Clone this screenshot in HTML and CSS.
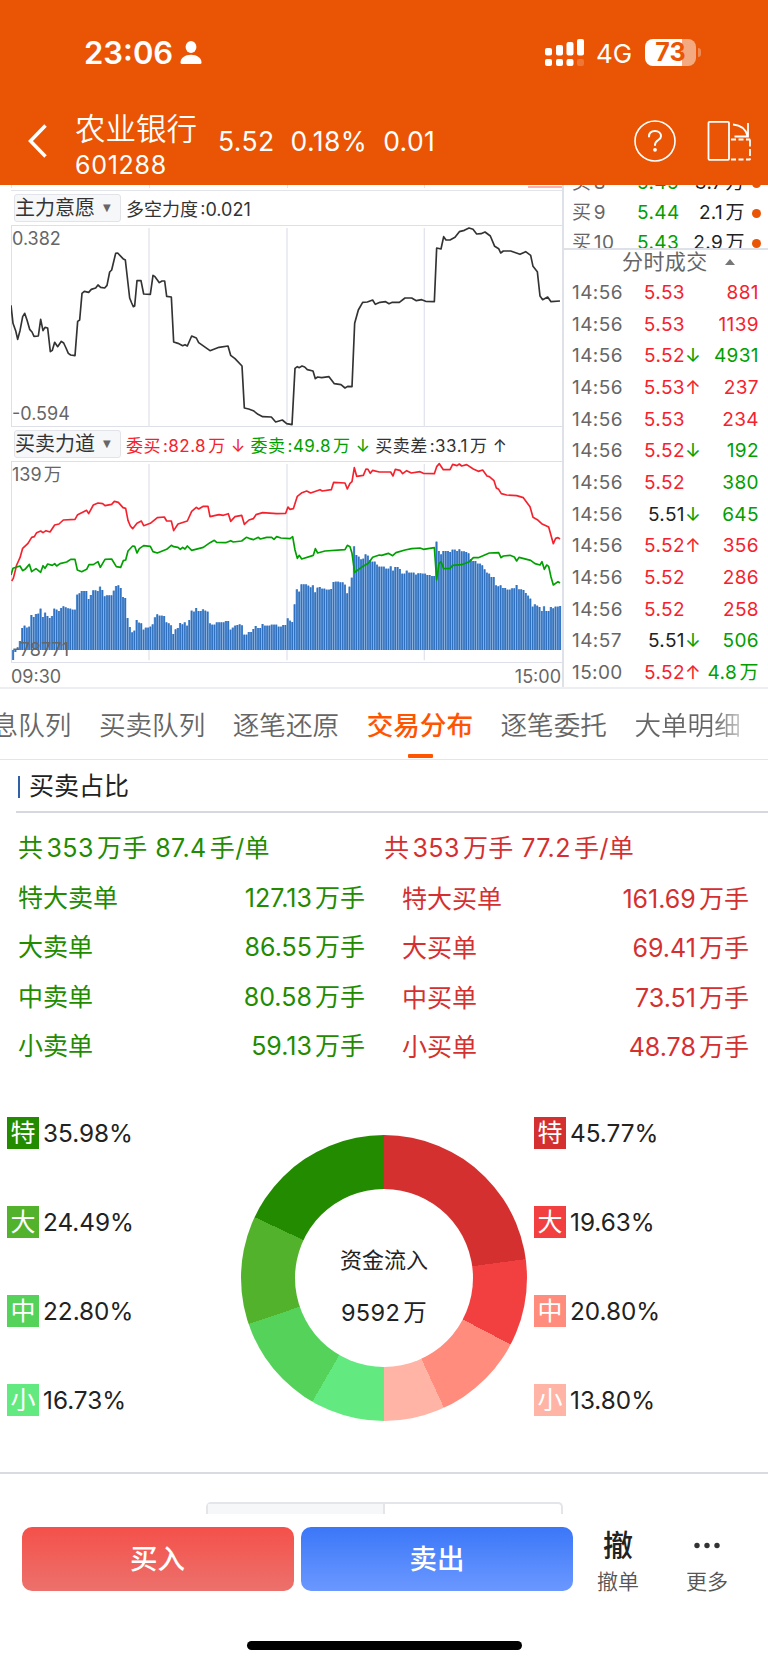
FILE: index.html
```html
<!DOCTYPE html>
<html lang="zh-CN">
  <head>
    <meta charset="UTF-8" />
    <meta name="viewport" content="width=device-width, initial-scale=1.0" />
    <title>农业银行 601288</title>
    <link rel="stylesheet" href="styles.css" />
  </head>

  <body>
    <header>
      <div class="status">
        <span class="time">23:06</span>
        <svg class="person" width="22" height="24" viewBox="0 0 22 24" fill="#fff">
          <ellipse cx="11" cy="6" rx="5.4" ry="6" />
          <path d="M0.5 21.5C0.5 17 5 13.8 11 13.8S21.500 17 21.500 21.500Q21.500 23 20 23H2Q0.500 23 0.500 21.500Z" />
        </svg>
        <svg class="signal" width="40" height="28" viewBox="0 0 40 28" fill="#fff">
          <rect x="0" y="9" width="7" height="7.500" rx="2" />
          <rect x="11" y="6" width="7" height="10.500" rx="2" />
          <rect x="21.500" y="3" width="7" height="13.500" rx="2" />
          <rect x="32" y="0" width="7" height="16.500" rx="2" />
          <rect x="0" y="20" width="7" height="7" rx="2" />
          <rect x="11" y="20" width="7" height="7" rx="2" />
          <rect x="21.500" y="20" width="7" height="7" rx="2" />
          <rect x="32" y="20" width="7" height="7" rx="2" opacity="0.2" />
        </svg>
        <span class="net">4G</span>
        <span class="battery">73</span>
        <i class="nub"></i>
      </div>
      <div class="stock">
        <svg class="back" width="20" height="34" viewBox="0 0 20 34" fill="none" stroke="#fff" stroke-width="3.500">
          <path d="M17.500 1.500L2.500 17L17.500 32.500" />
        </svg>
        <div class="name">
          <h1>农业银行</h1>
          <p>601288</p>
        </div>
        <div class="quote"><span>5.52</span><span>0.18%</span><span>0.01</span></div>
        <svg class="help" width="42" height="42" viewBox="0 0 42 42" fill="none" stroke="#fff" stroke-width="1.600">
          <circle cx="21" cy="21" r="20" />
          <path d="M15 16.500C15 13 17.500 11 21 11S27 13 27 16.200C27 20.200 21 20 21 25" stroke-width="2" stroke-linecap="round" />
          <circle cx="21" cy="29.800" r="1.900" fill="#fff" stroke="none" />
        </svg>
        <svg class="rotate" width="45" height="42" viewBox="0 0 45 42" fill="none" stroke="#fff" stroke-width="1.800">
          <rect x="1.500" y="1.800" width="20.500" height="38" rx="1" />
          <path d="M26 4.500Q38 5.500 40.500 16M41 3V16.500H27.500" />
          <path d="M24 19.500H43.200M24 39.500H43.200" stroke-dasharray="5 2.500" />
          <path d="M43 19.500V40" stroke-dasharray="7 2.500" />
        </svg>
      </div>
    </header>

    <main>
      <section class="market">
        <div class="charts">
          <div class="edge"><i></i><i></i><i></i><i></i></div>
          <div class="legend">
            <button>主力意愿<b>▼</b></button>
            <span>多空力度:0.021</span>
          </div>
          <div class="chart first">
            <svg viewBox="33 138 1659 603" width="553" height="201" fill="none">
              <path class="grid" d="M447 144V741M861 144V741M1273 144V741" />
              <polyline class="dark" points="33,376 39,430 47,452 53,478 60,452 68,410 74,400 81,420 89,448 96,456 102,469 115,468 122,418 129,452 135,442 143,444 151,515 157,511 164,487 173,500 184,484 191,489 198,504 205,520 212,525 225,527 233,424 239,420 246,340 253,334 266,337 274,328 287,324 294,315 302,322 314,324 321,316 329,276 335,270 347,220 353,219 369,236 376,240 389,354 395,369 400,380 404,378 411,302 423,302 431,342 451,343 459,286 465,290 478,308 486,303 494,303 500,349 514,351 521,486 534,490 548,497 555,494 562,498 575,468 589,474 596,488 630,512 657,502 684,498 692,526 705,536 726,558 733,684 746,687 760,692 774,703 788,710 814,711 827,726 847,720 860,731 876,734 885,565 892,560 898,563 906,558 914,561 922,569 939,573 946,596 953,591 965,593 987,590 1003,611 1023,614 1035,624 1043,619 1056,620 1064,430 1075,390 1088,367 1102,366 1118,360 1126,373 1140,367 1157,365 1167,371 1177,367 1198,367 1215,354 1235,354 1249,362 1265,359 1277,364 1303,365 1310,204 1323,207 1331,170 1338,180 1350,180 1365,172 1378,155 1393,151 1407,144 1419,148 1430,162 1443,161 1455,156 1471,168 1484,199 1496,206 1502,219 1510,213 1532,213 1560,223 1577,215 1592,226 1599,259 1612,275 1620,348 1628,359 1643,351 1653,365 1680,363" />
            </svg>
            <span class="max">0.382</span>
            <span class="min">-0.594</span>
          </div>
          <div class="legend second">
            <button>买卖力道<b>▼</b></button>
            <span class="red">委买:82.8万 <em>↓</em></span>
            <span class="green">委卖:49.8万 <em>↓</em></span>
            <span>买卖差:33.1万 <em>↑</em></span>
          </div>
          <div class="chart last">
            <svg viewBox="33 111 1659 600" width="553" height="200" fill="none">
              <path class="grid" d="M447 117V706M861 117V706M1273 117V706" />
              <g id="bars"></g>
              <polyline class="up" points="35,468 40,460 50,420 60,398 68,370 84,355 95,337 103,335 110,323 122,318 129,323 138,317 150,321 164,300 177,297 190,285 225,283 233,269 260,256 266,266 280,240 294,234 308,236 315,242 335,238 343,229 355,232 369,248 377,250 384,286 391,303 398,311 411,295 424,288 431,302 451,295 472,278 493,276 500,288 514,288 521,317 534,297 562,288 575,259 589,247 596,252 610,244 624,244 630,275 657,269 670,271 685,266 692,289 705,275 725,271 733,298 747,285 760,281 768,269 788,263 830,266 857,265 864,246 870,253 880,251 892,214 906,203 920,198 932,204 960,194 967,198 994,194 1001,172 1035,174 1042,192 1050,175 1056,170 1063,128 1070,154 1090,151 1098,132 1104,133 1111,145 1118,136 1138,141 1172,141 1179,153 1186,133 1200,136 1208,146 1220,137 1234,144 1260,140 1270,145 1303,146 1310,125 1318,116 1330,134 1350,134 1358,118 1371,122 1378,117 1385,123 1400,119 1420,132 1435,139 1448,135 1461,153 1468,155 1482,167 1489,189 1496,193 1504,206 1520,210 1550,212 1570,218 1590,245 1599,277 1612,284 1625,296 1646,306 1660,356 1667,340 1674,338 1680,342" />
              <polyline class="down" points="33,450 39,430 60,423 68,437 75,433 88,418 95,440 108,431 122,442 129,422 135,430 143,417 157,421 164,416 170,423 180,416 200,411 212,403 225,403 232,435 245,440 260,433 267,419 280,419 294,410 301,427 315,403 335,402 349,425 362,427 370,407 377,405 384,378 398,363 404,364 411,384 418,371 431,362 451,364 459,380 472,384 500,373 514,361 521,365 534,367 541,373 548,367 555,372 562,363 575,376 610,367 630,353 643,346 650,352 677,353 692,347 700,351 725,348 739,337 747,340 760,344 775,337 781,342 800,337 815,337 822,343 830,335 843,339 870,341 878,335 885,375 892,400 898,391 905,402 940,391 946,371 953,384 975,378 1035,374 1042,361 1050,365 1056,385 1064,442 1084,427 1105,415 1118,397 1138,390 1145,391 1165,385 1178,392 1188,383 1215,375 1235,371 1260,369 1270,373 1303,368 1310,465 1317,415 1323,410 1331,431 1350,430 1358,421 1385,419 1408,410 1420,398 1435,398 1468,384 1496,383 1503,398 1510,393 1530,391 1543,396 1550,408 1557,397 1592,406 1605,416 1620,420 1626,410 1633,433 1640,420 1646,424 1653,456 1660,480 1674,470 1680,474" />
            </svg>
            <span class="max">139万</span>
            <span class="min">-78771</span>
          </div>
          <div class="axis"><span>09:30</span><span>15:00</span></div>
        </div>

        <aside>
          <div class="book">
            <p><span>买8</span><span class="green">5.45</span><span>3.7万</span><i></i></p>
            <p><span>买9</span><span class="green">5.44</span><span>2.1万</span><i></i></p>
            <p><span>买10</span><span class="green">5.43</span><span>2.9万</span><i></i></p>
          </div>
          <h2>分时成交<b></b></h2>
          <ul>
            <li><span>14:56</span><span class="red">5.53</span><em></em><span class="red">881</span></li>
            <li><span>14:56</span><span class="red">5.53</span><em></em><span class="red">1139</span></li>
            <li><span>14:56</span><span class="red">5.52</span><em class="green">↓</em><span class="green">4931</span></li>
            <li><span>14:56</span><span class="red">5.53</span><em class="red">↑</em><span class="red">237</span></li>
            <li><span>14:56</span><span class="red">5.53</span><em></em><span class="red">234</span></li>
            <li><span>14:56</span><span class="red">5.52</span><em class="green">↓</em><span class="green">192</span></li>
            <li><span>14:56</span><span class="red">5.52</span><em></em><span class="green">380</span></li>
            <li><span>14:56</span><span>5.51</span><em class="green">↓</em><span class="green">645</span></li>
            <li><span>14:56</span><span class="red">5.52</span><em class="red">↑</em><span class="red">356</span></li>
            <li><span>14:56</span><span class="red">5.52</span><em></em><span class="red">286</span></li>
            <li><span>14:56</span><span class="red">5.52</span><em></em><span class="red">258</span></li>
            <li><span>14:57</span><span>5.51</span><em class="green">↓</em><span class="green">506</span></li>
            <li><span>15:00</span><span class="red">5.52</span><em class="red">↑</em><span class="green">4.8万</span></li>
          </ul>
        </aside>
      </section>

      <nav>
        <a>消息队列</a>
        <a>买卖队列</a>
        <a>逐笔还原</a>
        <a class="valgt">交易分布</a>
        <a>逐笔委托</a>
        <a>大单明细</a>
      </nav>

      <section class="ratio">
        <h3>买卖占比</h3>
        <div class="orders">
          <div class="sell">
            <p class="sum">共353万手 87.4手/单</p>
            <p><span>特大卖单</span><span>127.13万手</span></p>
            <p><span>大卖单</span><span>86.55万手</span></p>
            <p><span>中卖单</span><span>80.58万手</span></p>
            <p><span>小卖单</span><span>59.13万手</span></p>
          </div>
          <div class="buy">
            <p class="sum">共353万手 77.2手/单</p>
            <p><span>特大买单</span><span>161.69万手</span></p>
            <p><span>大买单</span><span>69.41万手</span></p>
            <p><span>中买单</span><span>73.51万手</span></p>
            <p><span>小买单</span><span>48.78万手</span></p>
          </div>
        </div>
        <div class="flow">
          <ul>
            <li><b class="s1">特</b>35.98%</li>
            <li><b class="s2">大</b>24.49%</li>
            <li><b class="s3">中</b>22.80%</li>
            <li><b class="s4">小</b>16.73%</li>
          </ul>
          <div class="donut">
            <div class="hole"><span>资金流入</span><span class="amount">9592万</span></div>
          </div>
          <ul>
            <li><b class="b1">特</b>45.77%</li>
            <li><b class="b2">大</b>19.63%</li>
            <li><b class="b3">中</b>20.80%</li>
            <li><b class="b4">小</b>13.80%</li>
          </ul>
        </div>
      </section>

      <div class="switch"><i></i><i></i></div>
    </main>

    <footer>
      <button class="buybtn">买入</button>
      <button class="sellbtn">卖出</button>
      <a><b>撤</b>撤单</a>
      <a>
        <svg width="28" height="37" viewBox="0 0 28 37" fill="#333">
          <circle cx="4" cy="18.500" r="2.700" />
          <circle cx="14" cy="18.500" r="2.700" />
          <circle cx="24" cy="18.500" r="2.700" />
        </svg>
        更多
      </a>
    </footer>
    <div class="home"></div>

    <script>
      // [x, top] where the order difference changes, zero line is at 675
      const diff = [
        [39,705],[46,681],[53,667],[60,648],[67,609],[74,602],[81,608],[88,605],[95,570],[102,576],[109,567],[115,566],
        [122,551],[129,576],[135,563],[142,573],[149,579],[156,573],[163,551],[170,554],[177,558],[184,549],[190,544],
        [197,547],[204,550],[211,551],[218,554],[225,554],[232,509],[238,505],[245,498],[259,498],[266,522],[273,510],
        [280,496],[294,498],[301,485],[308,495],[314,514],[321,511],[335,511],[342,497],[349,483],[356,481],[363,489],
        [369,516],[376,519],[383,579],[390,606],[397,622],[404,617],[411,585],[418,593],[425,595],[431,614],[438,608],
        [452,605],[459,598],[465,577],[472,568],[479,572],[493,573],[500,592],[507,595],[514,601],[520,627],[527,613],
        [534,609],[541,594],[548,598],[555,592],[562,602],[568,585],[575,557],[582,560],[589,549],[596,558],[603,558],
        [610,553],[617,557],[624,560],[630,595],[637,599],[644,599],[651,592],[671,592],[678,588],[685,588],[692,614],
        [699,608],[705,602],[712,600],[719,598],[726,601],[733,629],[740,629],[747,621],[760,612],[768,603],[774,609],
        [788,597],[795,602],[822,599],[836,605],[857,600],[864,580],[870,587],[877,591],[884,538],[890,493],[897,500],
        [904,478],[914,478],[925,482],[932,487],[939,481],[946,502],[953,488],[960,486],[967,491],[980,494],[994,492],
        [1001,471],[1007,470],[1028,472],[1035,479],[1042,505],[1049,485],[1056,458],[1063,364],[1070,390],[1077,395],
        [1083,403],[1090,401],[1097,388],[1104,392],[1111,405],[1118,410],[1132,419],[1139,425],[1152,425],[1159,431],
        [1166,431],[1172,424],[1179,437],[1186,426],[1200,432],[1207,446],[1221,437],[1228,443],[1240,443],[1248,449],
        [1255,445],[1275,446],[1282,450],[1303,453],[1310,350],[1317,378],[1324,388],[1331,378],[1345,378],[1352,381],
        [1358,374],[1372,378],[1378,373],[1385,379],[1400,381],[1408,385],[1414,402],[1421,408],[1435,416],[1448,421],
        [1455,433],[1462,443],[1468,446],[1475,456],[1482,456],[1489,481],[1496,484],[1502,481],[1509,489],[1523,494],
        [1543,490],[1550,480],[1557,493],[1570,495],[1577,504],[1584,512],[1591,521],[1598,545],[1605,538],[1612,542],
        [1619,546],[1626,558],[1633,544],[1640,558],[1647,558],[1653,546],[1660,550],[1667,545],[1680,543]
      ];
      let bars = "";
      for (let i = 0; i < 240; i++) {
        const x = 39 + i * 6.866;
        let best = diff[0];
        diff.forEach((d) => {
          if (Math.abs(d[0] - x) < Math.abs(best[0] - x)) best = d;
        });
        const y = Math.min(best[1], 675);
        const h = Math.abs(675 - best[1]);
        bars += `<rect class="gap" x="${x - 3.4}" y="${y}" width="6.9" height="${h}"/>`;
        bars += `<rect class="bar" x="${x - 1.5}" y="${y}" width="4" height="${h}"/>`;
      }
      document.querySelector("#bars").innerHTML = bars;
    </script>
  </body>
</html>
```

FILE: styles.css
```css
* {
  box-sizing: border-box;
  margin: 0;
  padding: 0;
}

body {
  width: 768px;
  height: 1665px;
  overflow: hidden;
  background: #fff;
  color: #222;
  font-family: Inter, "Noto Sans CJK SC", sans-serif;
  text-autospace: normal;
}

button {
  font-family: inherit;
  border: none;
}

ul {
  list-style: none;
}

em,
i {
  font-style: normal;
}

.red {
  color: #f5222d;
}

.green {
  color: #00a000;
}

/* header */

header {
  height: 185px;
  background: #e95504;
  color: #fff;
}

.status {
  display: flex;
  align-items: center;
  height: 105px;
  padding-left: 84px;
}

.time {
  width: 96px;
  font-size: 31px;
  font-weight: 600;
}

.signal {
  margin-left: 343px;
}

.net {
  width: 49px;
  margin-left: 11px;
  padding-top: 2px;
  font-size: 26px;
}

.battery {
  width: 51px;
  height: 27px;
  border-radius: 8px;
  background: linear-gradient(90deg, #fff 73%, #f4aa81 73%);
  color: #e95504;
  font-size: 25px;
  font-weight: 700;
  line-height: 27px;
  text-align: center;
}

.nub {
  width: 3px;
  height: 9px;
  margin-left: 2px;
  border-radius: 0 4px 4px 0;
  background: #f08a55;
}

.stock {
  display: flex;
  align-items: center;
  height: 72px;
  padding-left: 28px;
}

.name {
  width: 143px;
  margin-left: 27px;
  padding-top: 12px;
}

.name h1 {
  font-size: 30.5px;
  font-weight: 350;
  line-height: 36px;
  white-space: nowrap;
}

.name p {
  font-size: 25px;
  letter-spacing: 0.7px;
  line-height: 36px;
}

.quote {
  display: flex;
  gap: 16px;
  width: 416px;
  font-size: 26.5px;
  letter-spacing: 0.4px;
}

.rotate {
  margin-left: 31px;
}

/* charts and trades */

.market {
  display: flex;
  height: 504px;
  border-bottom: 2px solid #eceef1;
}

.charts {
  width: 564px;
  padding-left: 11px;
  border-right: 2px solid #dfe1e8;
}

.edge {
  display: flex;
  height: 6px;
  border-bottom: 1px solid #e2e4ec;
}

.edge i {
  width: 138px;
  height: 3px;
  border-left: 1px solid #e2e4ec;
}

.edge i:last-child {
  border-image: none;
  background: linear-gradient(#ffb0b0, #ffb0b0) right bottom / 34px 2px no-repeat;
}

.legend {
  display: flex;
  align-items: center;
  height: 34px;
  padding-left: 3px;
  font-size: 18px;
  white-space: nowrap;
  color: #333;
}

.legend button {
  width: 107px;
  height: 28px;
  margin-right: 5px;
  border: 1px solid #e2e4ea;
  border-radius: 3px;
  background: #f6f7f9;
  color: #333;
  font-size: 20px;
  line-height: 26px;
  text-align: left;
}

.legend b {
  margin-left: 8px;
  font-family: "DejaVu Sans";
  font-size: 10px;
  vertical-align: 4px;
  color: #666;
}

.legend.second span {
  margin-right: 5px;
  font-size: 17px;
  letter-spacing: 0.45px;
}

.chart {
  position: relative;
  height: 202px;
  border: solid #dddfe9;
  border-width: 1px 0 1px 1px;
}

.chart svg {
  display: block;
  margin-left: -1px;
}

.grid {
  stroke: #e2e4ee;
  stroke-width: 4;
}

.dark,
.up,
.down {
  stroke: #333;
  stroke-width: 5;
  stroke-linejoin: round;
}

.up {
  stroke: #f5222d;
}

.down {
  stroke: #00a000;
}

.gap {
  fill: #6c9cd6;
}

.bar {
  fill: #2f71c0;
}

.chart span {
  position: absolute;
  left: 0;
  font-size: 18px;
  line-height: 20px;
  color: #666;
}

.max {
  top: 3px;
}

.min {
  bottom: 2px;
}

.axis {
  display: flex;
  justify-content: space-between;
  padding-right: 1px;
  font-size: 18px;
  line-height: 27px;
  color: #666;
}

aside {
  width: 204px;
  font-size: 19px;
  letter-spacing: 0.4px;
}

.book {
  display: flex;
  flex-direction: column;
  justify-content: flex-end;
  height: 65px;
  overflow: hidden;
  border-bottom: 2px solid #dfe1e8;
}

.book p {
  display: flex;
  flex: none;
  align-items: center;
  height: 30px;
  margin-bottom: 0;
  padding-left: 8px;
  line-height: 22px;
}

.book p:last-child {
  margin-bottom: -10px;
}

.book span:first-child {
  width: 65px;
  color: #666;
}

.book span:nth-child(2) {
  width: 42px;
}

.book span:nth-child(3) {
  width: 66px;
  text-align: right;
}

.book i {
  width: 9px;
  height: 9px;
  margin-left: 7px;
  border-radius: 50%;
  background: #e95504;
}

aside h2 {
  display: flex;
  align-items: center;
  height: 27px;
  padding: 0 0 3px 58px;
  font-size: 21px;
  font-weight: 400;
  line-height: 24px;
  color: #666;
}

aside h2 b {
  margin-left: 17px;
  border: 5px solid transparent;
  border-top: none;
  border-bottom: 6px solid #777;
}

aside ul {
  padding: 0 9px 0 8px;
}

aside li {
  display: flex;
  align-items: center;
  height: 31.7px;
  line-height: 24px;
}

aside li span:first-child {
  width: 61px;
  color: #666;
}

aside li span:nth-child(2) {
  width: 52px;
  text-align: right;
}

aside li em {
  width: 12px;
}

aside li span:last-child {
  flex: 1;
  text-align: right;
  white-space: nowrap;
}

/* tabs */

nav {
  display: flex;
  gap: 27.5px;
  height: 71px;
  margin-left: -35px;
  border-bottom: 1px solid #e4e5e8;
  font-size: 26.6px;
  font-weight: 350;
  line-height: 73px;
  white-space: nowrap;
  color: #666;
}

nav a.valgt {
  position: relative;
  color: #ff5500;
  font-weight: 500;
}

nav a.valgt::after {
  content: "";
  position: absolute;
  left: 41px;
  bottom: 1px;
  width: 25px;
  height: 4px;
  border-radius: 1px;
  background: #ff5500;
}

nav a:last-child {
  background: linear-gradient(90deg, #666 74%, #ccc 100%);
  background-clip: text;
  color: transparent;
}

/* sell / buy ratio */

h3 {
  height: 53px;
  margin-left: 16px;
  padding-left: 2px;
  border-bottom: 2px solid #d5d8de;
  font-size: 25px;
  font-weight: 400;
  line-height: 52px;
}

h3::before {
  content: "";
  display: inline-block;
  width: 2px;
  height: 22px;
  margin-right: 9px;
  background: #3060a8;
  vertical-align: -3px;
}

.orders {
  display: grid;
  grid-template-columns: 347px 347px;
  column-gap: 37px;
  padding: 11px 0 0 18px;
  font-size: 25px;
  font-weight: 370;
}

.sell {
  color: #228b00;
}

.buy {
  color: #d4302f;
}

.orders p {
  display: flex;
  justify-content: space-between;
  height: 49.5px;
  line-height: 49px;
}

.orders .sum {
  letter-spacing: 0.4px;
}

.buy p:not(.sum) {
  position: relative;
  top: 1px;
}

.buy .sum {
  margin-left: -18px;
}

.flow {
  display: flex;
  height: 402px;
  padding: 45px 0 0 7px;
  border-bottom: 2px solid #d9dbe0;
}

.flow ul {
  width: 234px;
}

.flow li {
  display: flex;
  gap: 4px;
  height: 89.300px;
  font-size: 24.3px;
  line-height: 33px;
  color: #222;
}

.flow b {
  width: 32px;
  height: 32px;
  color: #fff;
  font-size: 25px;
  font-weight: 370;
  line-height: 32px;
  text-align: center;
}

.s1 { background: #228b00; }
.s2 { background: #52b22c; }
.s3 { background: #54d25a; }
.s4 { background: #62ea80; }
.b1 { background: #d4302f; }
.b2 { background: #f24040; }
.b3 { background: #ff8c7c; }
.b4 { background: #ffb4a6; }

.donut {
  display: flex;
  align-items: center;
  justify-content: center;
  width: 286px;
  height: 286px;
  margin: 18px 7px 0 0;
  border-radius: 50%;
  background: conic-gradient(
    #d4302f 82.4deg,
    #f24040 82.4deg 117.7deg,
    #ff8c7c 117.7deg 155.2deg,
    #ffb4a6 155.2deg 180deg,
    #62ea80 180deg 210.1deg,
    #54d25a 210.1deg 251.2deg,
    #52b22c 251.2deg 295.2deg,
    #228b00 295.2deg
  );
}

.hole {
  display: flex;
  flex-direction: column;
  align-items: center;
  gap: 21px;
  width: 178px;
  height: 178px;
  padding-top: 55px;
  border-radius: 50%;
  background: #fff;
  font-size: 22px;
  line-height: 32px;
}

.amount {
  font-size: 23.5px;
  letter-spacing: 0.4px;
}

.switch {
  display: flex;
  width: 357px;
  height: 12px;
  margin: 28px auto 0;
  border: 2px solid #e3e5e8;
  border-bottom: none;
  border-radius: 5px 5px 0 0;
}

.switch i {
  flex: 1;
}

.switch i:first-child {
  border-right: 2px solid #e3e5e8;
  background: #f6f7f9;
}

/* bottom bar */

footer {
  display: flex;
  height: 127px;
  padding: 13px 0 0 21.5px;
}

footer button {
  width: 272px;
  height: 64px;
  margin-right: 7.5px;
  padding-bottom: 3px;
  border-radius: 10px;
  color: #fff;
  font-size: 27.5px;
  font-weight: 500;
}

.buybtn {
  background: linear-gradient(#f5504a, #ec716c);
}

.sellbtn {
  background: linear-gradient(#3b77f8, #6b98ff);
}

footer a {
  display: flex;
  flex-direction: column;
  align-items: center;
  width: 89px;
  font-size: 21px;
  font-weight: 350;
  line-height: 35px;
  color: #555;
}

footer a:nth-of-type(1) {
  margin-left: -7px;
}

footer b {
  font-size: 30px;
  font-weight: 500;
  line-height: 37px;
  color: #222;
}

.home {
  width: 275px;
  height: 9px;
  margin: 0 auto;
  border-radius: 5px;
  background: #000;
}
```
